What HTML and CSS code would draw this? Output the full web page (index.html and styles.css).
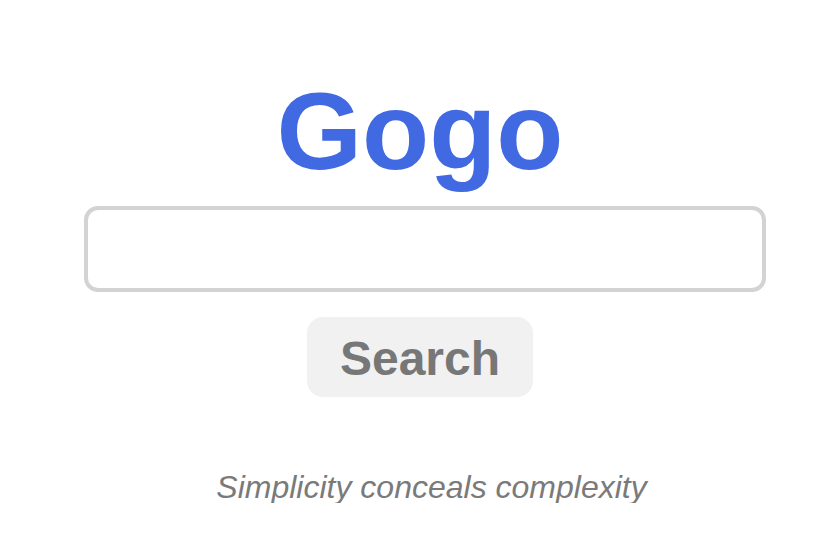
FILE: index.html
```html
<!DOCTYPE html>
<html lang="en">
<head>
<meta charset="utf-8">
<title>Gogo</title>
<link rel="stylesheet" href="styles.css">
</head>
<body>
<main class="page">
  <h1 class="logo">Gogo</h1>
  <form class="search-form">
    <div class="field-row"><input class="search-input" type="text" aria-label="Search"></div>
    <button class="search-button" type="button">Search</button>
  </form>
  <p class="tagline">Simplicity conceals complexity</p>
</main>
</body>
</html>
```
FILE: styles.css
```css
html, body {
  margin: 0;
  padding: 0;
  background: #ffffff;
}
body {
  font-family: "Liberation Sans", Arial, sans-serif;
}
.page {
  display: flex;
  flex-direction: column;
  align-items: center;
  padding-top: 76px;
}
.logo {
  margin: 0;
  font-size: 110px;
  line-height: 110px;
  font-weight: 700;
  color: #4169e1;
}
.search-form {
  display: flex;
  flex-direction: column;
  align-items: center;
  width: 100%;
}
.field-row {
  width: 100%;
  display: flex;
  justify-content: flex-start;
  padding-left: 84px;
  box-sizing: border-box;
  margin-top: 20px;
}
.search-input {
  box-sizing: border-box;
  width: 682px;
  height: 86px;
  border: 4px solid #d3d3d3;
  border-radius: 14px;
  background: #fff;
  outline: none;
  font-family: inherit;
  font-size: 24px;
  padding: 0 16px;
}
.search-button {
  margin-top: 25px;
  box-sizing: border-box;
  height: 80px;
  padding: 14px 33px 10px;
  border: none;
  border-radius: 16px;
  background: #f1f1f1;
  color: #777777;
  font-family: inherit;
  font-size: 48px;
  line-height: 56px;
  font-weight: 700;
}
.tagline {
  margin: 74px 0 0 23px;
  font-size: 32px;
  line-height: 32px;
  font-style: italic;
  color: #7a7a7a;
}
```
